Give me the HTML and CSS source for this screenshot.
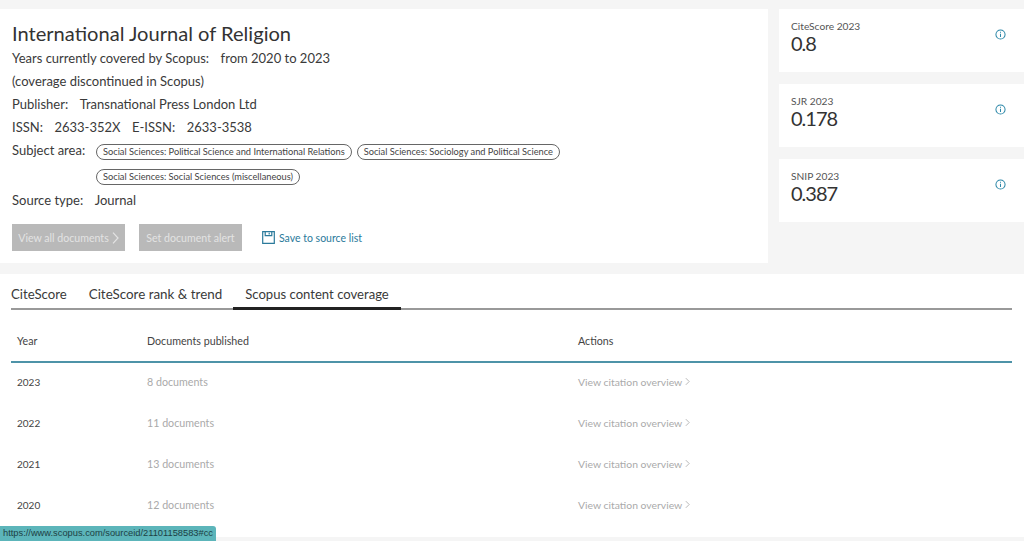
FILE: index.html
```html
<!DOCTYPE html>
<html lang="en">
<head>
<meta charset="utf-8">
<title>International Journal of Religion</title>
<link rel="stylesheet" href="styles.css">
</head>
<body>
<div class="top">
  <section class="main">
    <h1>International Journal of Religion</h1>
    <p class="line">Years currently covered by Scopus:<span class="val">from 2020 to 2023</span></p>
    <p class="line">(coverage discontinued in Scopus)</p>
    <p class="line">Publisher:<span class="val">Transnational Press London Ltd</span></p>
    <p class="line">ISSN:<span class="val">2633-352X</span><span class="val">E-ISSN:</span><span class="val">2633-3538</span></p>
    <div class="subject">
      <span class="subject-label">Subject area:</span>
      <div class="chips">
        <span class="chip">Social Sciences: Political Science and International Relations</span>
        <span class="chip">Social Sciences: Sociology and Political Science</span>
        <span class="chip">Social Sciences: Social Sciences (miscellaneous)</span>
      </div>
    </div>
    <p class="line type">Source type:<span class="val">Journal</span></p>
    <div class="actions">
      <span class="btn btn-view">View all documents<svg class="chev-lg" viewBox="0 0 7 12" width="7" height="12"><path d="M1 .7l5 5.3-5 5.3" fill="none" stroke="currentColor" stroke-width="1.2"/></svg></span>
      <span class="btn btn-alert">Set document alert</span>
      <span class="save"><svg viewBox="0 0 13 13" width="13" height="13"><path d="M.7.7h11.6v11.6H.7zM3.2.7v4h6.6v-4M7.2 1.8v1.6" fill="none" stroke="#2b7a9b" stroke-width="1.2"/></svg>Save to source list</span>
    </div>
  </section>
  <aside class="side">
    <div class="metric"><div><div class="m-label">CiteScore 2023</div><div class="m-value">0.8</div></div><svg class="info" viewBox="0 0 12 12" width="11" height="11"><circle cx="6" cy="6" r="5" fill="none" stroke="#2b87a8" stroke-width="1.1"/><path d="M6 5.2v3.4M6 3v1.2" stroke="#2b87a8" stroke-width="1.1"/></svg></div>
    <div class="metric"><div><div class="m-label">SJR 2023</div><div class="m-value">0.178</div></div><svg class="info" viewBox="0 0 12 12" width="11" height="11"><circle cx="6" cy="6" r="5" fill="none" stroke="#2b87a8" stroke-width="1.1"/><path d="M6 5.2v3.4M6 3v1.2" stroke="#2b87a8" stroke-width="1.1"/></svg></div>
    <div class="metric"><div><div class="m-label">SNIP 2023</div><div class="m-value">0.387</div></div><svg class="info" viewBox="0 0 12 12" width="11" height="11"><circle cx="6" cy="6" r="5" fill="none" stroke="#2b87a8" stroke-width="1.1"/><path d="M6 5.2v3.4M6 3v1.2" stroke="#2b87a8" stroke-width="1.1"/></svg></div>
  </aside>
</div>
<section class="lower">
  <nav class="tabs">
    <span class="tab">CiteScore</span>
    <span class="tab tab-rank">CiteScore rank &amp; trend</span>
    <span class="tab active">Scopus content coverage</span>
  </nav>
  <div class="table">
    <div class="row head"><span>Year</span><span>Documents published</span><span>Actions</span></div>
    <div class="row"><span class="yr">2023</span><span class="muted">8 documents</span><span class="muted link">View citation overview<svg viewBox="0 0 6 10" width="5" height="9"><path d="M1 1l4 4-4 4" fill="none" stroke="currentColor"/></svg></span></div>
    <div class="row"><span class="yr">2022</span><span class="muted">11 documents</span><span class="muted link">View citation overview<svg viewBox="0 0 6 10" width="5" height="9"><path d="M1 1l4 4-4 4" fill="none" stroke="currentColor"/></svg></span></div>
    <div class="row"><span class="yr">2021</span><span class="muted">13 documents</span><span class="muted link">View citation overview<svg viewBox="0 0 6 10" width="5" height="9"><path d="M1 1l4 4-4 4" fill="none" stroke="currentColor"/></svg></span></div>
    <div class="row"><span class="yr">2020</span><span class="muted">12 documents</span><span class="muted link">View citation overview<svg viewBox="0 0 6 10" width="5" height="9"><path d="M1 1l4 4-4 4" fill="none" stroke="currentColor"/></svg></span></div>
  </div>
</section>
<div class="status">https://www.scopus.com/sourceid/21101158583#cc</div>
</body>
</html>
```

FILE: styles.css
```css
* { box-sizing: border-box; }
html, body { margin: 0; height: 541px; overflow: hidden; }
body {
  background: #f5f5f5;
  font-family: Lato, "Open Sans", sans-serif;
  color: #333;
  position: relative;
  -webkit-font-smoothing: antialiased;
}
.top { display: flex; gap: 11px; padding-top: 9px; height: 263px; }
.main { width: 768px; background: #fff; padding: 12px 12px 0; }
h1 { margin: 0 0 2px; font-size: 20.1px; line-height: 24px; font-weight: 400; color: #333; }
.line { margin: 0; font-size: 13px; line-height: 23px; color: #3a3a3a; }
.val { margin-left: 11.5px; }
.subject { display: flex; font-size: 13px; line-height: 23px; color: #3a3a3a; }
.subject-label { width: 84px; flex: none; }
.chips { display: flex; flex-wrap: wrap; gap: 9px 5px; padding-top: 5px; max-width: 500px; height: 46px; }
.chip {
  font-size: 9.25px; line-height: 14px; height: 16px;
  border: 1px solid #666; border-radius: 8px; padding: 0 6px; color: #444;
}
.type { margin-top: 4px; }
.actions { display: flex; align-items: center; margin-top: 12px; font-size: 10.6px; }
.btn { background: #b9b9b9; color: #e3e3e3; height: 27px; display: flex; align-items: center; justify-content: center; }
.btn-view { width: 113px; gap: 3px; }
.btn-alert { width: 103px; margin-left: 14px; }
.save { display: flex; align-items: center; gap: 4px; margin-left: 20px; color: #2b7a9b; font-size: 10.5px; }
.side { flex: 1; display: flex; flex-direction: column; gap: 12px; }
.metric { height: 63px; background: #fff; padding: 11px 18px 0 12px; display: flex; justify-content: space-between; align-items: flex-start; }
.m-label { font-size: 10.2px; line-height: 13px; color: #555; }
.m-value { font-size: 20px; line-height: 21px; color: #333; letter-spacing: -1px; }
.info { margin-top: 8.5px; }
.lower { background: #fff; margin-top: 11px; height: 263px; padding: 0 12px 0 11px; }
.tabs { display: flex; height: 36px; border-bottom: 2px solid #999; }
.tab { font-size: 13.2px; line-height: 20px; padding: 4px 11px 0; height: 36px; display: flex; align-items: center; color: #3a3a3a; }
.tab:first-child { padding-left: 0; }
.tab-rank { font-size: 13.4px; }
.tab.active { font-size: 13.1px; padding-left: 12px; padding-right: 12px; box-shadow: inset 0 -3px 0 #222; }
.row {
  display: grid; grid-template-columns: 130px 431px 1fr;
  height: 41px; align-items: center; padding: 0 0 4px 6px; font-size: 10.7px; color: #444;
}
.head { height: 53px; border-bottom: 2px solid #4e93a8; padding-top: 9px; padding-bottom: 0; }
.yr { font-size: 10px; }
.muted { color: #aaa; }
.link { display: flex; align-items: center; gap: 3px; font-size: 10.4px; }
.status {
  position: absolute; left: 0; bottom: 0; width: 216px; height: 15px;
  background: #5cb5ba; border-top-right-radius: 3px;
  font-family: "Liberation Sans", Arial, sans-serif; font-size: 9.3px; line-height: 15px;
  padding-left: 3px; color: #1d3f44; white-space: nowrap;
}
```
